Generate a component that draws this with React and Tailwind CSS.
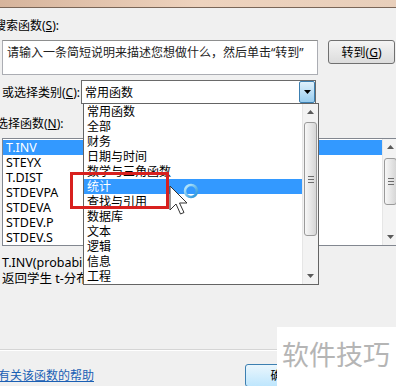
import React from 'react';

// Categories in the open combobox list, index 5 is the hovered one
const CATS = ['常用函数', '全部', '财务', '日期与时间', '数学与三角函数', '统计', '查找与引用', '数据库', '文本', '逻辑', '信息', '工程'];
const FUNCS = ['T.INV', 'STEYX', 'T.DIST', 'STDEVPA', 'STDEVA', 'STDEV.P', 'STDEV.S'];

function Arrow({ up }) {
  return (
    <svg width="7" height="4" viewBox="0 0 7 4">
      <path d={up ? 'M0 4 L3.5 0 L7 4 Z' : 'M0 0 L7 0 L3.5 4 Z'} fill="#5a5a5a" />
    </svg>
  );
}

// ─── Win7 style vertical scrollbar ───────────────────────────────────────────
function Scrollbar({ thumbTop, thumbH }) {
  return (
    <div className="w-[16px] h-full flex flex-col bg-[#f3f3f3] border-l border-[#e6e6e6]">
      <div className="h-[16px] flex items-center justify-center">
        <Arrow up />
      </div>
      <div className="flex-1 px-[1px]">
        <div
          className={`${thumbTop} ${thumbH} rounded-[3px] border border-[#9a9a9a] bg-gradient-to-r from-[#f7f7f7] to-[#d6d6d6] flex flex-col items-center justify-center gap-[2px]`}
        >
          <div className="w-[6px] h-px bg-[#6d6d6d]" />
          <div className="w-[6px] h-px bg-[#6d6d6d]" />
          <div className="w-[6px] h-px bg-[#6d6d6d]" />
        </div>
      </div>
      <div className="h-[16px] flex items-center justify-center">
        <Arrow />
      </div>
    </div>
  );
}

export default function App() {
  return (
    <div className="relative w-[396px] h-[386px] overflow-hidden bg-[#f0f0f0] text-[12px] leading-[15px] text-black font-['Noto_Sans','Noto_Sans_CJK_SC',sans-serif]">
      {/* ── window title strip ─────────────────────────────── */}
      <div className="h-[8px] bg-gradient-to-r from-[#d6b49c] via-[#eed3be] to-[#e8cfbb] border-b border-[#7a6658]" />

      <div className="mt-[10px] ml-[-6px]">
        搜索函数(<span className="underline">S</span>):
      </div>

      <div className="mt-[7px] flex items-start">
        <div className="ml-[2px] w-[316px] h-[35px] bg-white border border-[#abadb3] border-t-[#8e8f8f] pl-[4px] pt-[4px] text-[#222]">
          请输入一条简短说明来描述您想做什么，然后单击“转到”
        </div>
        <button className="ml-[10px] w-[67px] h-[24px] rounded-[3px] border border-[#707070] bg-gradient-to-b from-[#f4f4f4] to-[#dcdcdc] text-[12px] leading-[15px]">
          转到(<span className="underline">G</span>)
        </button>
      </div>

      <div className="mt-[5px] flex items-center">
        <div className="w-[81px] pl-[2px] whitespace-nowrap">
          或选择类别(<span className="underline">C</span>):
        </div>
        <div className="w-[235px] h-[24px] bg-white border border-[#6a6a6a] flex items-center">
          <div className="flex-1 pl-[3px]">常用函数</div>
          <div className="w-[16px] h-[22px] rounded-[2px] border border-[#3c7fb1] bg-gradient-to-b from-[#dff1fc] to-[#98ccee] flex items-center justify-center">
            <svg width="7" height="4" viewBox="0 0 7 4">
              <path d="M0 0 L7 0 L3.5 4 Z" fill="#000" />
            </svg>
          </div>
        </div>
      </div>

      <div className="mt-[12px] ml-[-4px]">
        选择函数(<span className="underline">N</span>):
      </div>

      {/* ── function list ─────────────────────────────────── */}
      <div className="mt-[7px] ml-[2px] w-[397px] h-[108px] bg-white border border-[#828790] flex">
        <div className="flex-1 pt-[1px]">
          {FUNCS.map((f, i) => (
            <div
              key={f}
              className={`h-[15px] pl-[3px] text-[12.5px] leading-[15px] ${i === 0 ? 'bg-[#3399ff] text-white' : ''}`}
            >
              {f}
            </div>
          ))}
        </div>
        <Scrollbar thumbTop="mt-[3px]" thumbH="h-[47px]" />
      </div>

      {/* description, the open dropdown hides everything right of x=83 */}
      <div className="mt-[9px] pl-[2px] w-[83px] overflow-hidden leading-[16px] text-[12.5px] whitespace-nowrap">
        <div>T.INV(probability,deg_freedom)</div>
        <div>返回学生 t-分布的左尾逆函数</div>
      </div>

      <div className="mt-[62px] border-t border-[#d5d5d5] border-b border-b-white" />

      <div className="mt-[13px] flex items-center">
        <a className="ml-[-2px] text-[#1a5fb4] underline whitespace-nowrap">有关该函数的帮助</a>
        <button className="ml-auto mr-[76px] w-[75px] h-[23px] rounded-[3px] border border-[#3c7fb1] bg-gradient-to-b from-[#eaf6fd] to-[#bee6fd] text-[12px]">
          确定
        </button>
      </div>

      {/* ── opened category dropdown ─────────────────────── */}
      <div className="absolute left-[83px] top-[103px] w-[236px] h-[182px] bg-white border border-[#646464] flex">
        <div className="flex-1">
          {CATS.map((c, i) => (
            <div key={c} className={`h-[15px] pl-[3px] leading-[15px] ${i === 5 ? 'bg-[#3399ff] text-white' : ''}`}>
              {c}
            </div>
          ))}
        </div>
        <Scrollbar thumbTop="mt-[2px]" thumbH="h-[114px]" />
      </div>

      {/* ── red marker box ──────────────────────────────── */}
      <div className="absolute left-[70px] top-[172px] w-[99px] h-[37px] border-[3px] border-[#d8201e]" />

      {/* ── mouse cursor with busy ring ─────────────────── */}
      <svg className="absolute left-[169px] top-[181px]" width="32" height="36" viewBox="0 0 32 36">
        <defs>
          <linearGradient id="ring" x1="0" y1="0" x2="1" y2="1">
            <stop offset="0" stopColor="#c6f0ff" />
            <stop offset="1" stopColor="#1f8fd8" />
          </linearGradient>
        </defs>
        <circle cx="22" cy="10" r="6" fill="none" stroke="url(#ring)" strokeWidth="2.5" />
        <path
          d="M1 5 L1 29 L7 23 L11.5 33 L15 31.5 L10.5 22 L18 22 Z"
          fill="#fff"
          stroke="#333"
          strokeWidth="1"
          strokeLinejoin="round"
        />
      </svg>

      {/* ── watermark ───────────────────────────────────── */}
      <div className="absolute left-[277px] top-[327px] right-0 bottom-0 bg-white pl-[5px] pt-[10px] text-[27px] leading-[34px] text-[#b5b5b5] font-['Noto_Sans_CJK_SC',sans-serif] whitespace-nowrap">
        软件技巧
      </div>
    </div>
  );
}
